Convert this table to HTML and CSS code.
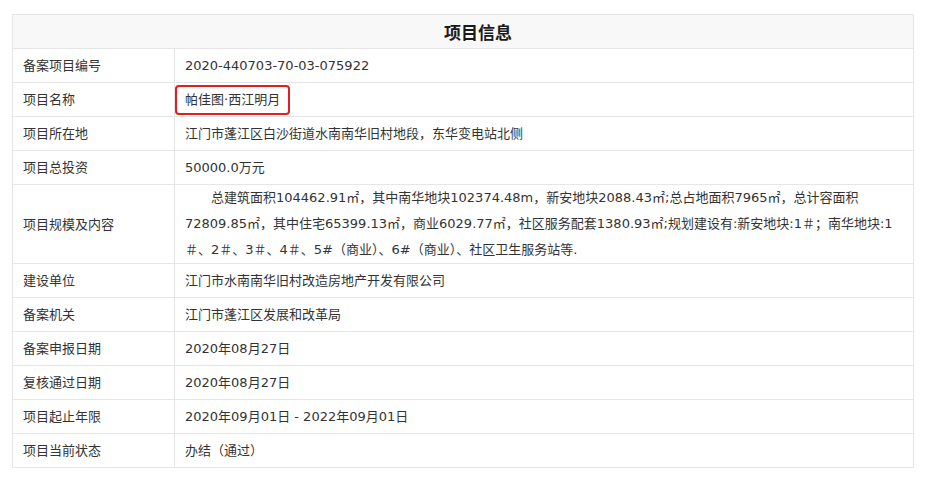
FILE: index.html
```html
<!DOCTYPE html>
<html lang="zh-CN">
<head>
    <meta charset="UTF-8">
    <meta name="viewport" content="width=device-width, initial-scale=1.0">
    <title>项目信息</title>
    <link rel="stylesheet" href="styles.css">
</head>
<body>
    <table class="info-table">
        <colgroup>
            <col class="col-label">
            <col>
        </colgroup>
        <tr>
            <th colspan="2">项目信息</th>
        </tr>
        <tr>
            <td>备案项目编号</td>
            <td>2020-440703-70-03-075922</td>
        </tr>
        <tr>
            <td>项目名称</td>
            <td><span class="highlight">帕佳图·西江明月</span></td>
        </tr>
        <tr>
            <td>项目所在地</td>
            <td>江门市蓬江区白沙街道水南南华旧村地段，东华变电站北侧</td>
        </tr>
        <tr>
            <td>项目总投资</td>
            <td>50000.0万元</td>
        </tr>
        <tr>
            <td>项目规模及内容</td>
            <td class="long">
                <p>总建筑面积104462.91㎡，其中南华地块102374.48m，新安地块2088.43㎡;总占地面积7965㎡，总计容面积<br>72809.85㎡，其中住宅65399.13㎡，商业6029.77㎡，社区服务配套1380.93㎡;规划建设有:新安地块:1＃；南华地块:1<br>＃、2＃、3＃、4＃、5#（商业）、6#（商业）、社区卫生服务站等.</p>
            </td>
        </tr>
        <tr>
            <td>建设单位</td>
            <td>江门市水南南华旧村改造房地产开发有限公司</td>
        </tr>
        <tr>
            <td>备案机关</td>
            <td>江门市蓬江区发展和改革局</td>
        </tr>
        <tr>
            <td>备案申报日期</td>
            <td>2020年08月27日</td>
        </tr>
        <tr>
            <td>复核通过日期</td>
            <td>2020年08月27日</td>
        </tr>
        <tr>
            <td>项目起止年限</td>
            <td>2020年09月01日 - 2022年09月01日</td>
        </tr>
        <tr>
            <td>项目当前状态</td>
            <td>办结（通过）</td>
        </tr>
    </table>
</body>
</html>
```

FILE: styles.css
```css
body {
    font-family: "DejaVu Sans", "Noto Sans CJK SC", sans-serif;
    margin: 0;
    padding: 14px 0 0 12px;
    background-color: #fff;
    color: #333;
    font-size: 13px;
}

.info-table {
    width: 902px;
    border-collapse: collapse;
    table-layout: fixed;
}

.col-label {
    width: 162px;
}

.info-table th {
    font-family: "Noto Sans CJK SC", sans-serif;
    background-color: #f8f8f8;
    color: #1a1a1a;
    font-size: 17px;
    font-weight: bold;
    height: 33px;
    padding: 0 0 0 30px;
    border: 1px solid #e6e6e6;
    text-align: center;
}

.info-table td {
    border: 1px solid #e6e6e6;
    padding: 4px 10px 3px;
    line-height: 26px;
    vertical-align: middle;
    white-space: nowrap;
}

.info-table td.long {
    padding: 0 10px;
}

.long p {
    margin: 0;
    text-indent: 2em;
    line-height: 26px;
}

.highlight {
    display: inline-block;
    margin: -3px 0 -3px -10px;
    padding: 1px 8px;
    line-height: 24px;
    border: 2px solid #e02020;
    border-radius: 4px;
}
```
